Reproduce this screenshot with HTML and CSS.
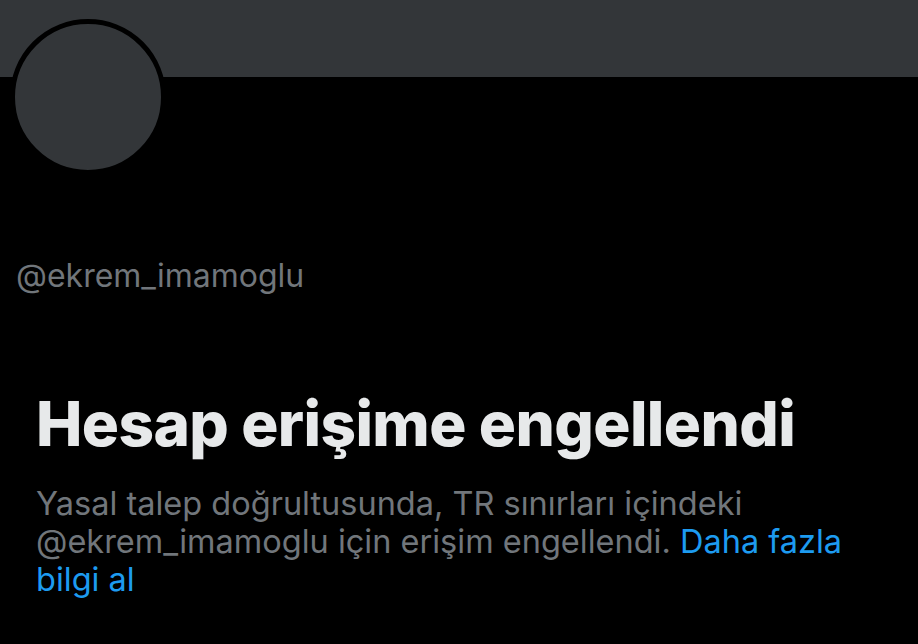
FILE: index.html
```html
<!DOCTYPE html>
<html lang="tr">
<head>
    <meta charset="UTF-8">
    <meta name="viewport" content="width=device-width, initial-scale=1.0">
    <title>@ekrem_imamoglu</title>
    <link rel="stylesheet" href="styles.css">
</head>
<body>
    <div class="banner"></div>
    <div class="profile">
        <div class="avatar"></div>
        <div class="handle">@ekrem_imamoglu</div>
    </div>
    <div class="notice">
        <h1>Hesap erişime engellendi</h1>
        <p>Yasal talep doğrultusunda, TR sınırları içindeki @ekrem_imamoglu için erişim engellendi. <a href="#">Daha fazla bilgi al</a></p>
    </div>
</body>
</html>
```

FILE: styles.css
```css
body {
    margin: 0;
    padding: 0;
    background-color: #000;
    font-family: Inter, "Noto Sans", sans-serif;
    overflow: hidden;
}
.banner {
    height: 77px;
    background-color: #333639;
}
.profile {
    padding-left: 10px;
}
.avatar {
    width: 146px;
    height: 146px;
    margin-top: -58px;
    border: 5px solid #000;
    border-radius: 50%;
    background-color: #333639;
}
.handle {
    margin-top: 83px;
    padding-left: 6px;
    font-size: 32px;
    line-height: 36px;
    color: #71767b;
}
.notice {
    padding: 0 36px;
}
.notice h1 {
    margin: 94px 0 0;
    font-size: 62px;
    line-height: 72px;
    font-weight: 800;
    color: #e7e9ea;
    letter-spacing: -0.6px;
}
.notice p {
    margin: 25px 0 0;
    max-width: 822px;
    font-size: 32.5px;
    line-height: 38px;
    color: #71767b;
}
.notice a {
    color: #1d9bf0;
    text-decoration: none;
}
```
